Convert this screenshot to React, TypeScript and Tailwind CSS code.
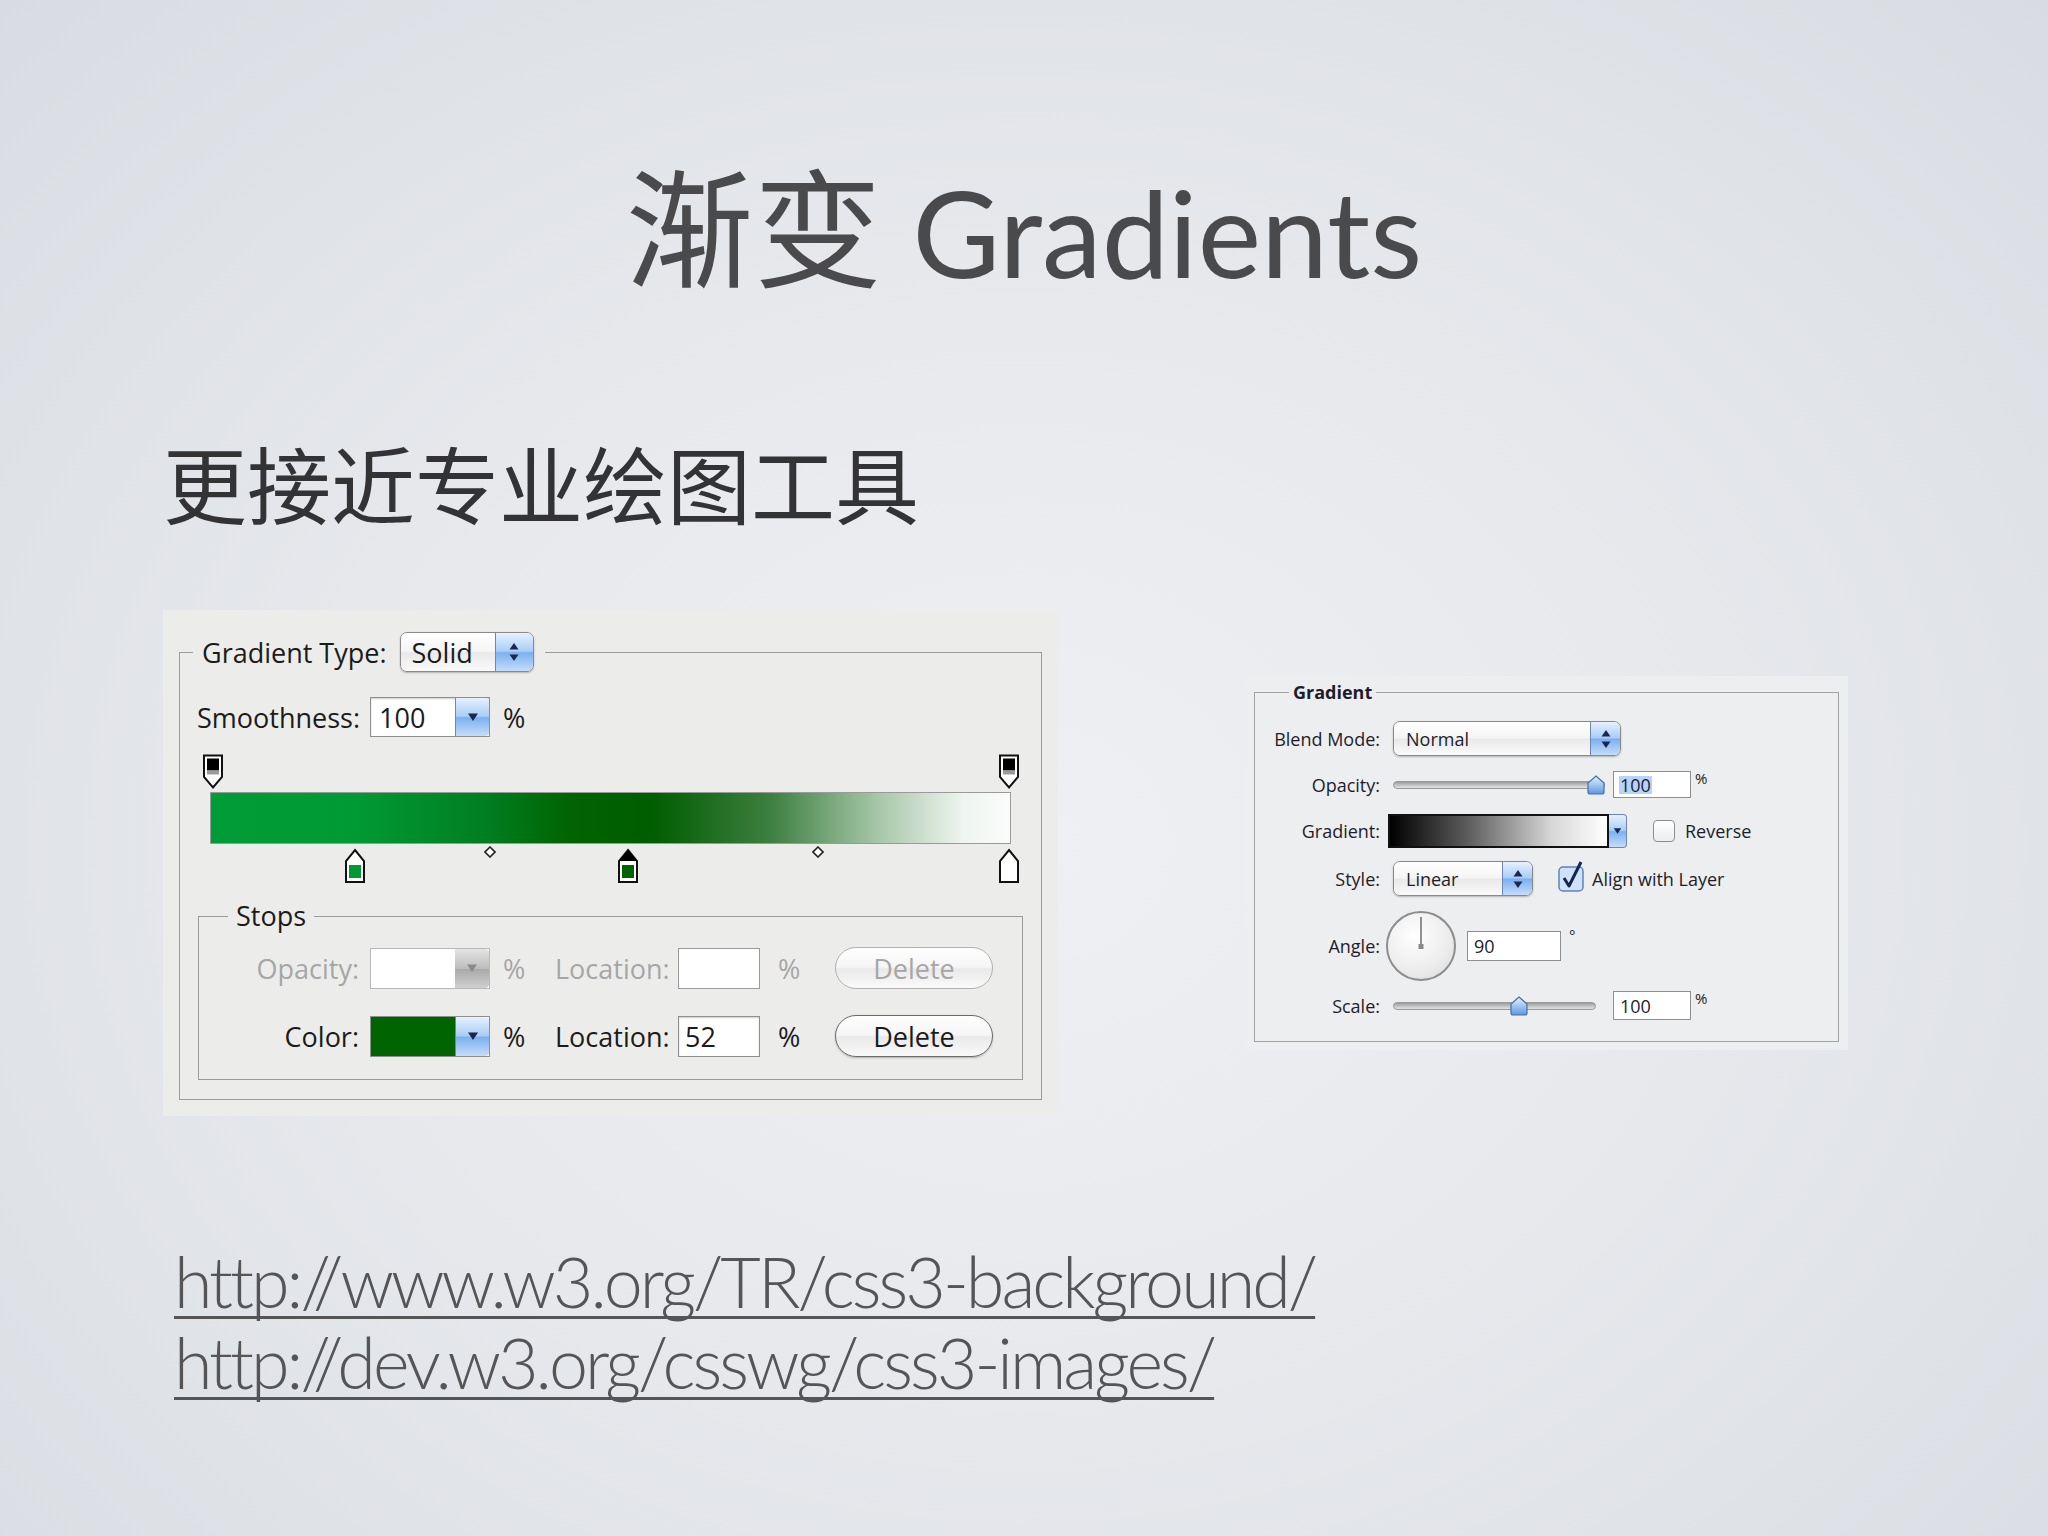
import React from "react";

const aqua =
  "bg-[linear-gradient(to_bottom,#e6f1ff_0%,#a9cdf6_48%,#7cb0ee_52%,#c3ddfb_100%)]";
const glossy =
  "bg-[linear-gradient(to_bottom,#ffffff_0%,#f5f5f5_48%,#e9e9e9_52%,#fafafa_100%)]";

function UpDown() {
  return (
    <svg width="12" height="22" viewBox="0 0 12 22">
      <path d="M6 2 L10.5 8.5 L1.5 8.5 Z" fill="#1c2550" />
      <path d="M1.5 13.5 L10.5 13.5 L6 20 Z" fill="#1c2550" />
    </svg>
  );
}

function Down({ color = "#1c2550", w = 12 }: { color?: string; w?: number }) {
  return (
    <svg width={w} height={w * 0.85} viewBox="0 0 12 10">
      <path d="M1 1.5 L11 1.5 L6 9 Z" fill={color} />
    </svg>
  );
}

function TopStop() {
  return (
    <svg width="24" height="36" viewBox="0 0 24 36">
      <path d="M3 1.5 H21 V23 L12 33.5 L3 23 Z" fill="#fff" stroke="#111" strokeWidth="2" />
      <rect x="6" y="4.5" width="12" height="12" fill="#000" />
      <rect x="6" y="16.5" width="12" height="4" fill="#9a9a9a" />
    </svg>
  );
}

function BottomStop({ color, selected }: { color: string; selected?: boolean }) {
  return (
    <svg width="24" height="36" viewBox="0 0 24 36">
      <path d="M12 2 L21 13 V34 H3 V13 Z" fill="#fff" stroke="#111" strokeWidth="2" />
      {selected && <path d="M12 2 L21 13 H3 Z" fill="#000" />}
      <rect x="6" y="17" width="12" height="13" fill={color} />
    </svg>
  );
}

function Diamond() {
  return (
    <svg width="12" height="12" viewBox="0 0 12 12">
      <path d="M6 1 L11 6 L6 11 L1 6 Z" fill="#fff" stroke="#222" strokeWidth="1.6" />
    </svg>
  );
}

function Thumb() {
  return (
    <svg width="18" height="20" viewBox="0 0 18 20">
      <defs>
        <linearGradient id="th" x1="0" y1="0" x2="0" y2="1">
          <stop offset="0" stopColor="#e8f2ff" />
          <stop offset="0.5" stopColor="#9ec6f3" />
          <stop offset="1" stopColor="#5d97e0" />
        </linearGradient>
      </defs>
      <path d="M9 1 L17 8 V17 Q17 19 15 19 H3 Q1 19 1 17 V8 Z" fill="url(#th)" stroke="#4a6ea6" strokeWidth="1.2" />
    </svg>
  );
}

function Slider({ width, at }: { width: number; at: number }) {
  return (
    <div className="relative h-[20px]" style={{ width }}>
      <div className="absolute left-0 right-0 top-[6px] h-[8px] rounded-full border border-[#9a9a9a] bg-[linear-gradient(to_bottom,#9b9b9b,#c9c9c9_60%,#e2e2e2)]" />
      <div className="absolute top-0" style={{ left: at }}>
        <Thumb />
      </div>
    </div>
  );
}

function LeftPanel() {
  return (
    <div className="h-[506px] w-[895px] bg-[#ecedeb] pl-[16px] pt-[22px] font-['Open_Sans',sans-serif] text-[27px] text-[#1b1b1b]">
      <fieldset className="w-[863px] border border-[#9c9c9c] pb-[19px] pl-[13px]">
        <legend className="flex items-center px-[9px]">
          <span className="leading-none">Gradient Type:</span>
          <div className="ml-[13px] flex h-[40px] w-[134px] overflow-hidden rounded-[7px] border border-[#8a8a8a] shadow-[0_1px_2px_rgba(0,0,0,0.25)]">
            <div className={`flex flex-1 items-center pl-[11px] leading-none ${glossy}`}>Solid</div>
            <div className={`flex w-[38px] items-center justify-center border-l border-[#6f86b5] ${aqua}`}>
              <UpDown />
            </div>
          </div>
          <span className="w-[2px]" />
        </legend>

        <div className="ml-[4px] mt-[25px] flex h-[40px] items-center">
          <span className="w-[173px] leading-none">Smoothness:</span>
          <div className="flex h-[40px] w-[120px] border border-[#8f8f8f] bg-white shadow-[inset_0_1px_2px_rgba(0,0,0,0.2)]">
            <div className="flex flex-1 items-center pl-[8px] leading-none">100</div>
            <div className={`flex w-[34px] items-center justify-center rounded-r-[4px] border-l border-[#6f86b5] ${aqua}`}>
              <Down />
            </div>
          </div>
          <span className="ml-[13px] leading-none">%</span>
        </div>

        <div className="relative mt-[13px] h-[140px]">
          <div className="absolute left-[8px] top-[4px]"><TopStop /></div>
          <div className="absolute left-[804px] top-[4px]"><TopStop /></div>
          <div className="absolute left-[17px] top-[42px] h-[52px] w-[801px] border border-[#9a9a9a] bg-[linear-gradient(to_right,#009c36_0%,#009a35_18%,#007f22_34%,#006400_45%,#005d00_55%,#3d7f40_70%,#a3c4a5_83%,#eef4ef_94%,#fbfcfb_100%)]" />
          <div className="absolute left-[150px] top-[98px]"><BottomStop color="#009933" /></div>
          <div className="absolute left-[291px] top-[96px]"><Diamond /></div>
          <div className="absolute left-[423px] top-[98px]"><BottomStop color="#006400" selected /></div>
          <div className="absolute left-[619px] top-[96px]"><Diamond /></div>
          <div className="absolute left-[804px] top-[98px]"><BottomStop color="#ffffff" /></div>
        </div>

        <fieldset className="ml-[5px] mt-[9px] w-[825px] border border-[#9c9c9c] pb-[22px] pl-[29px]">
          <legend className="px-[8px] leading-[34px]">Stops</legend>

          <div className="mt-[14px] flex h-[42px] items-center text-[#a6a6a6]">
            <span className="w-[131px] text-right leading-none">Opacity:</span>
            <div className="ml-[11px] flex h-[41px] w-[120px] border border-[#b9b9b9] bg-white">
              <div className="flex-1" />
              <div className="flex w-[34px] items-center justify-center rounded-r-[4px] bg-[linear-gradient(to_bottom,#e4e4e4,#bdbdbd_50%,#aaaaaa_52%,#cfcfcf)]">
                <Down color="#8a8a8a" />
              </div>
            </div>
            <span className="ml-[13px] w-[52px] leading-none">%</span>
            <span className="w-[123px] leading-none">Location:</span>
            <div className="h-[41px] w-[82px] border border-[#9a9a9a] bg-white" />
            <span className="ml-[18px] w-[57px] leading-none">%</span>
            <div className={`flex h-[42px] w-[158px] items-center justify-center rounded-full border border-[#b0b0b0] leading-none ${glossy}`}>
              Delete
            </div>
          </div>

          <div className="mt-[26px] flex h-[42px] items-center">
            <span className="w-[131px] text-right leading-none">Color:</span>
            <div className="ml-[11px] flex h-[41px] w-[120px] border border-[#8f8f8f] bg-white">
              <div className="flex-1 bg-[#006400]" />
              <div className={`flex w-[34px] items-center justify-center rounded-r-[4px] border-l border-[#6f86b5] ${aqua}`}>
                <Down />
              </div>
            </div>
            <span className="ml-[13px] w-[52px] leading-none">%</span>
            <span className="w-[123px] leading-none">Location:</span>
            <div className="flex h-[41px] w-[82px] items-center border border-[#8f8f8f] bg-white pl-[6px] leading-none shadow-[inset_0_1px_2px_rgba(0,0,0,0.2)]">
              52
            </div>
            <span className="ml-[18px] w-[57px] leading-none">%</span>
            <div className={`flex h-[42px] w-[158px] items-center justify-center rounded-full border border-[#6a6a6a] leading-none shadow-[0_1px_2px_rgba(0,0,0,0.25)] ${glossy}`}>
              Delete
            </div>
          </div>
        </fieldset>
      </fieldset>
    </div>
  );
}

function Label({ children }: { children: React.ReactNode }) {
  return <span className="w-[117px] text-right leading-none">{children}</span>;
}

function Check() {
  return (
    <svg width="30" height="32" viewBox="0 0 30 32" className="overflow-visible">
      <rect x="1" y="7" width="24" height="24" rx="4" fill="#cfe2fa" stroke="#5e84bd" strokeWidth="1.5" />
      <path d="M6 18 L11 26 L23 2" fill="none" stroke="#15264f" strokeWidth="3" strokeLinejoin="round" />
    </svg>
  );
}

function RightPanel() {
  return (
    <div className="h-[374px] w-[601px] bg-[#edeef0] pl-[7px] pt-[5px] font-['Open_Sans',sans-serif] text-[18px] text-[#1d1d2a]">
      <fieldset className="w-[585px] border border-[#a3a3a3] pb-[21px] pl-[8px]">
        <legend className="ml-[26px] px-[4px] text-[18px] font-bold leading-[22px]">Gradient</legend>

        <div className="mt-[18px] flex h-[35px] items-center">
          <Label>Blend Mode:</Label>
          <div className="ml-[13px] flex h-[35px] w-[228px] overflow-hidden rounded-[7px] border border-[#8a8a8a] shadow-[0_1px_2px_rgba(0,0,0,0.25)]">
            <div className={`flex flex-1 items-center pl-[12px] leading-none ${glossy}`}>Normal</div>
            <div className={`flex w-[30px] items-center justify-center border-l border-[#6f86b5] ${aqua}`}>
              <UpDown />
            </div>
          </div>
        </div>

        <div className="mt-[15px] flex h-[27px] items-center">
          <Label>Opacity:</Label>
          <div className="ml-[13px]">
            <Slider width={212} at={194} />
          </div>
          <div className="ml-[8px] flex h-[27px] w-[78px] items-center border border-[#8f8f8f] bg-white pl-[5px] leading-none">
            <span className="bg-[#b5d3fb] px-[1px]">100</span>
          </div>
          <span className="ml-[4px] self-start text-[15px] leading-none">%</span>
        </div>

        <div className="mt-[16px] flex h-[34px] items-center">
          <Label>Gradient:</Label>
          <div className="ml-[8px] flex h-[34px] w-[239px]">
            <div className="flex-1 border-2 border-[#111] bg-[linear-gradient(to_right,#000000,#5a5a5a_35%,#d8d8d8_75%,#ffffff)]" />
            <div className={`flex w-[18px] items-center justify-center rounded-r-[4px] border border-l-0 border-[#6f86b5] ${aqua}`}>
              <Down w={9} />
            </div>
          </div>
          <div className="ml-[26px] h-[22px] w-[22px] rounded-[4px] border border-[#8d8d8d] bg-[linear-gradient(to_bottom,#ffffff,#ececec)]" />
          <span className="ml-[10px] leading-none">Reverse</span>
        </div>

        <div className="mt-[13px] flex h-[35px] items-center">
          <Label>Style:</Label>
          <div className="ml-[13px] flex h-[35px] w-[140px] overflow-hidden rounded-[7px] border border-[#8a8a8a] shadow-[0_1px_2px_rgba(0,0,0,0.25)]">
            <div className={`flex flex-1 items-center pl-[12px] leading-none ${glossy}`}>Linear</div>
            <div className={`flex w-[30px] items-center justify-center border-l border-[#6f86b5] ${aqua}`}>
              <UpDown />
            </div>
          </div>
          <div className="ml-[25px] -mt-[6px]">
            <Check />
          </div>
          <span className="ml-[4px] leading-none">Align with Layer</span>
        </div>

        <div className="mt-[15px] flex h-[70px] items-center">
          <Label>Angle:</Label>
          <div className="relative ml-[6px] h-[70px] w-[70px] rounded-full border-2 border-[#8d8d8d] bg-[radial-gradient(circle_at_40%_35%,#ffffff,#ececec_60%,#d6d6d6)]">
            <svg width="66" height="66" viewBox="0 0 66 66" className="absolute left-0 top-0">
              <line x1="33" y1="4" x2="33" y2="33" stroke="#777" strokeWidth="1.6" />
              <rect x="30.5" y="31" width="5" height="5" fill="#888" />
            </svg>
          </div>
          <div className="ml-[11px] flex h-[30px] w-[94px] items-center border border-[#8f8f8f] bg-white pl-[6px] leading-none">
            90
          </div>
          <span className="ml-[8px] -mt-[22px] text-[15px] leading-none">°</span>
        </div>

        <div className="mt-[10px] flex h-[29px] items-center">
          <Label>Scale:</Label>
          <div className="ml-[13px]">
            <Slider width={203} at={117} />
          </div>
          <div className="ml-[17px] flex h-[29px] w-[78px] items-center border border-[#8f8f8f] bg-white pl-[6px] leading-none">
            100
          </div>
          <span className="ml-[4px] self-start text-[15px] leading-none">%</span>
        </div>
      </fieldset>
    </div>
  );
}

export default function App() {
  return (
    <div className="h-[1536px] w-[2048px] overflow-hidden bg-[radial-gradient(ellipse_at_50%_55%,#eff0f3_0%,#e6e8ec_50%,#d8dce2_100%)] text-[#4a4a4c]">
      <h1 className="pt-[159px] text-center font-['Lato','Noto_Sans_CJK_SC',sans-serif] text-[120px] leading-none">
        <span className="font-['Noto_Sans_CJK_SC',sans-serif] text-[128px]">渐变</span> Gradients
      </h1>
      <p className="ml-[163px] mt-[148px] font-['Noto_Sans_CJK_SC',sans-serif] text-[84px] leading-none text-[#333335]">
        更接近专业绘图工具
      </p>
      <div className="ml-[163px] mt-[86px] flex items-center gap-[189px]">
        <LeftPanel />
        <RightPanel />
      </div>
      <div className="ml-[174px] mt-[125px] font-['Lato',sans-serif] text-[70px] font-light leading-[81px] tracking-[-3px] text-[#555557]">
        <div className="underline decoration-[3px] underline-offset-[8px] [text-decoration-skip-ink:none]">
          http://www.w3.org/TR/css3-background/
        </div>
        <div className="underline decoration-[3px] underline-offset-[8px] [text-decoration-skip-ink:none]">
          http://dev.w3.org/csswg/css3-images/
        </div>
      </div>
    </div>
  );
}
